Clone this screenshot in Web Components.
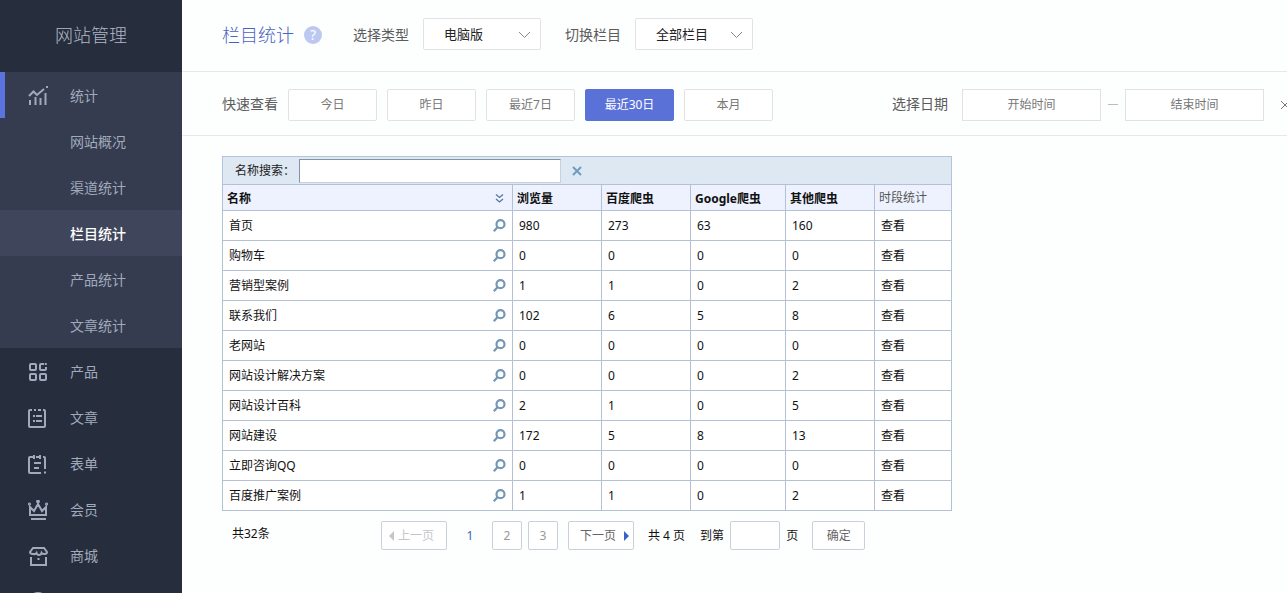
<!DOCTYPE html>
<html lang="zh-CN">
<head>
<meta charset="utf-8">
<title>栏目统计</title>
<style>
  body {
    margin: 0;
    background: #fdfefe;
    color: #111;
    font: 12px/20px "Noto Sans", "Noto Sans CJK SC", sans-serif;
  }
</style>
</head>
<body>
<stats-app></stats-app>

<script>
// rules every component needs
const baseStyle = `
  * { box-sizing: border-box; }
  a { color: inherit; text-decoration: none; }
  button, input, select { font: inherit; color: inherit; margin: 0; }
  button { cursor: pointer; }
  svg { display: block; fill: none; stroke: currentColor; }
`;

// 20x20 menu icons
const icons = {
  stats: '<path d="M1 10L5.500 5.500L9 9L16 3"/><path d="M2 14V19M7.500 11V19M12.500 12V19M17.500 7V19"/><path d="M18 1h2" />',
  product: '<rect x="2" y="2" width="6" height="6" rx="1"/><path d="M16 2h-3q-1 0-1 1v4q0 1 1 1h4q1 0 1-1V5M17.800 1v2"/><rect x="2" y="12" width="6" height="6" rx="1"/><rect x="12" y="12" width="6" height="6" rx="1"/>',
  article: '<path d="M4 2H2q-1 0-1 1v15q0 1 1 1h14q1 0 1-1V3q0-1-1-1h-1M6 2h2M10 2h3M5 8h2M8 8h6M5 13h2M8 13h6"/>',
  form: '<path d="M5 3H2q-1 0-1 1v14q0 1 1 1h11M8 3h3M15 3h1q1 0 1 1v11M17 17.500v2M6 1v4M12 1v4M6 9h7M6 14h5"/>',
  member: '<path d="M2 7v8h16V7l-4 4l-4-7l-4 7zM3 19h15"/><circle cx="1.500" cy="4" r=".6"/><circle cx="10" cy="1.500" r=".9"/><circle cx="18.500" cy="4" r=".6"/>',
  shop: '<path d="M5 2h11l3 4q0 2-2.500 2T13.500 7Q13 9 11 9T8.500 7Q7.500 8.500 5 8Q2 8 2 6zM3 11v8h15v-8M9.500 13h2"/>',
  setting: '<circle cx="10" cy="10" r="9"/><circle cx="10" cy="10" r="3"/>'
};

class NavItem extends HTMLElement {
  connectedCallback() {
    const icon = this.getAttribute('icon');
    this.attachShadow({mode: 'open'});
    this.shadowRoot.innerHTML = `
    <style>
      ${baseStyle}
      :host { display: block; color: #a0aabb; }
      a {
        display: grid;
        grid-template-columns: 20px 1fr;
        align-items: center;
        gap: 22px;
        height: 46px;
        padding: 2px 28px 0;
        font-size: 14px;
      }
      svg { stroke-width: 2; }
      :host([open]) a { box-shadow: inset 5px 0 #5b73dc; }
      :host([current]) { color: #fff; background: #3f455a; }
      :host([current]) a { font-weight: 500; }
    </style>
    <a href="#">
      ${icon ? `<svg width="20" height="20" viewBox="0 0 20 20" aria-hidden="true">${icons[icon]}</svg>` : '<i></i>'}
      <span><slot></slot></span>
    </a>`;
  }
}

class SideNav extends HTMLElement {
  connectedCallback() {
    this.attachShadow({mode: 'open'});
    this.shadowRoot.innerHTML = `
    <style>
      ${baseStyle}
      :host { display: block; background: #262d3c; overflow: hidden; }
      h1 {
        margin: 0;
        height: 72px;
        font-size: 18px;
        font-weight: 300;
        line-height: 70px;
        text-align: center;
        color: #b0b8c8;
      }
      .group { background: #353c50; }
    </style>
    <h1>网站管理</h1>
    <nav>
      <div class="group">
        <nav-item icon="stats" open>统计</nav-item>
        <nav-item>网站概况</nav-item>
        <nav-item>渠道统计</nav-item>
        <nav-item current>栏目统计</nav-item>
        <nav-item>产品统计</nav-item>
        <nav-item>文章统计</nav-item>
      </div>
      <nav-item icon="product">产品</nav-item>
      <nav-item icon="article">文章</nav-item>
      <nav-item icon="form">表单</nav-item>
      <nav-item icon="member">会员</nav-item>
      <nav-item icon="shop">商城</nav-item>
      <nav-item icon="setting"></nav-item>
    </nav>`;
  }
}

// label + drop-down
class SelectField extends HTMLElement {
  connectedCallback() {
    const label = this.getAttribute('label');
    const value = this.getAttribute('value');
    this.attachShadow({mode: 'open'});
    this.shadowRoot.innerHTML = `
    <style>
      ${baseStyle}
      :host { display: flex; align-items: center; gap: 14px; }
      label { font-size: 14px; color: #5c5c5c; padding-top: 2px; }
      .box { display: grid; align-items: center; }
      select, svg { grid-area: 1 / 1; }
      select {
        appearance: none;
        width: 118px;
        height: 32px;
        padding: 0 30px 0 20px;
        border: 1px solid #e2e2e6;
        border-radius: 2px;
        background: #fff;
        font-size: 13px;
        color: #222;
      }
      svg { justify-self: end; margin: 3px 10px 0 0; color: #888; pointer-events: none; }
    </style>
    <label for="field">${label}</label>
    <div class="box">
      <select id="field"><option>${value}</option></select>
      <svg width="13" height="8" viewBox="0 0 13 8"><path d="M1 1l5.500 5.500L12 1"/></svg>
    </div>`;
  }
}

class TopBar extends HTMLElement {
  connectedCallback() {
    this.attachShadow({mode: 'open'});
    this.shadowRoot.innerHTML = `
    <style>
      ${baseStyle}
      :host {
        display: flex;
        align-items: center;
        gap: 24px;
        height: 72px;
        padding: 0 40px 4px;
        border-bottom: 1px solid #e8e8ea;
        box-sizing: border-box;
      }
      .title { display: flex; align-items: center; gap: 10px; margin-right: 7px; padding-top: 2px; }
      h2 { margin: 0; font-size: 18px; font-weight: 300; color: #4a62c0; }
      .help {
        width: 18px;
        height: 18px;
        padding: 0;
        border: 0;
        border-radius: 50%;
        background: #bcc8f2;
        color: #fff;
        font-size: 14px;
        line-height: 18px;
      }
    </style>
    <div class="title">
      <h2>栏目统计</h2>
      <button class="help" type="button">?</button>
    </div>
    <select-field label="选择类型" value="电脑版"></select-field>
    <select-field label="切换栏目" value="全部栏目"></select-field>`;
  }
}

class FilterBar extends HTMLElement {
  connectedCallback() {
    this.attachShadow({mode: 'open'});
    this.shadowRoot.innerHTML = `
    <style>
      ${baseStyle}
      :host {
        display: flex;
        align-items: center;
        justify-content: space-between;
        height: 64px;
        padding: 2px 0 0 40px;
        border-bottom: 1px solid #e8e8ea;
        box-sizing: border-box;
        overflow: hidden;
      }
      .quick, .range { display: flex; align-items: center; }
      .label { font-size: 14px; color: #5c5c5c; padding-bottom: 2px; }
      .quick { gap: 10px; }
      .quick button {
        width: 89px;
        height: 32px;
        padding: 0;
        border: 1px solid #e2e2e6;
        border-radius: 2px;
        background: #fff;
        color: #777;
      }
      .quick button.on { background: #5a72d8; border-color: #5a72d8; color: #fff; }
      .range input {
        width: 139px;
        height: 32px;
        padding: 0;
        border: 1px solid #e2e2e6;
        background: #fff;
        text-align: center;
      }
      .range input::placeholder { color: #777; opacity: 1; }
      .range .label { margin-right: 14px; }
      .dash { width: 10px; height: 1px; margin: 0 7px; background: #bbb; }
      .clear { width: 7px; height: 12px; margin-left: 16px; padding: 0; border: 0; background: none; overflow: hidden; color: #777; }
    </style>
    <div class="quick">
      <span class="label">快速查看</span>
      <button type="button">今日</button>
      <button type="button">昨日</button>
      <button type="button">最近7日</button>
      <button type="button" class="on">最近30日</button>
      <button type="button">本月</button>
    </div>
    <div class="range">
      <label class="label" for="start">选择日期</label>
      <input id="start" placeholder="开始时间">
      <span class="dash"></span>
      <input id="end" placeholder="结束时间" aria-label="结束时间">
      <button class="clear" type="button" aria-label="清除">
        <svg width="10" height="10" viewBox="0 0 10 10"><path d="M1 1l8 8M9 1l-8 8"/></svg>
      </button>
    </div>`;

    this.shadowRoot.querySelectorAll('.quick button').forEach((btn) => {
      btn.addEventListener('click', () => {
        this.shadowRoot.querySelector('.on').classList.remove('on');
        btn.classList.add('on');
      });
    });
  }
}

const rows = [
  ['首页', 980, 273, 63, 160],
  ['购物车', 0, 0, 0, 0],
  ['营销型案例', 1, 1, 0, 2],
  ['联系我们', 102, 6, 5, 8],
  ['老网站', 0, 0, 0, 0],
  ['网站设计解决方案', 0, 0, 0, 2],
  ['网站设计百科', 2, 1, 0, 5],
  ['网站建设', 172, 5, 8, 13],
  ['立即咨询QQ', 0, 0, 0, 0],
  ['百度推广案例', 1, 1, 0, 2]
];

class StatsTable extends HTMLElement {
  connectedCallback() {
    this.attachShadow({mode: 'open'});
    this.shadowRoot.innerHTML = `
    <style>
      ${baseStyle}
      :host { display: block; }
      .search {
        display: flex;
        align-items: center;
        height: 28px;
        padding-left: 12px;
        border: 1px solid #b4c4da;
        border-bottom: 0;
        background: #dde8f2;
      }
      .search label { width: 64px; color: #222; }
      /* centred full-width colon */
      .colon { font-family: "Noto Sans CJK TC", sans-serif; line-height: 1; }
      .search input {
        width: 262px;
        height: 24px;
        padding: 0 4px;
        border: 1px solid #c8d2dc;
        border-top-color: #8493a5;
        border-left-color: #8493a5;
        background: #fff;
      }
      .search button { margin-left: 11px; padding: 0; border: 0; background: none; color: #6f9cc4; }
      .search button svg { stroke-width: 2; }
      table { width: 100%; table-layout: fixed; border-collapse: collapse; }
      th, td { border: 1px solid #b4c0d4; text-align: left; }
      th { height: 26px; padding: 2px 4px 0; background: #edf2fe; }
      th.plain { padding-top: 0; font-weight: 400; color: #555; }
      td { height: 30px; padding: 0 6px; background: #fff; }
      .name { display: flex; align-items: center; justify-content: space-between; }
      .name svg { color: #7397b8; }
      td .name button { padding: 0; border: 0; background: none; }
      td .name svg { stroke-width: 2.200; }
      th .name svg { margin-right: 4px; color: #51799f; stroke-width: 1.3; }
    </style>
    <div class="search">
      <label for="keyword">名称搜索<span class="colon">：</span></label>
      <input id="keyword" type="text">
      <button type="button" aria-label="清空">
        <svg width="10" height="10" viewBox="0 0 10 10"><path d="M1 1l8 8M9 1l-8 8"/></svg>
      </button>
    </div>
    <table>
      <colgroup>
        <col><col style="width: 89px"><col style="width: 89px"><col style="width: 95px"><col style="width: 89px"><col style="width: 77px">
      </colgroup>
      <thead>
        <tr>
          <th><div class="name">名称<svg width="9" height="9" viewBox="0 0 9 9"><path d="M1 .5l3.500 3l3.500-3M1 5l3.500 3L8 5"/></svg></div></th>
          <th>浏览量</th>
          <th>百度爬虫</th>
          <th>Google爬虫</th>
          <th>其他爬虫</th>
          <th class="plain">时段统计</th>
        </tr>
      </thead>
      <tbody>${rows.map((row) => this.getRow(row)).join('')}</tbody>
    </table>`;

    const keyword = this.shadowRoot.querySelector('#keyword');
    this.shadowRoot.querySelector('.search button').addEventListener('click', () => keyword.value = '');
  }

  getRow([name, ...counts]) {
    return `
    <tr>
      <td><div class="name">${name}<button type="button" aria-label="搜索"><svg width="13" height="13" viewBox="0 0 13 13"><circle cx="7.500" cy="5.200" r="4"/><path d="M4.700 8L.8 12.200"/></svg></button></div></td>
      ${counts.map((n) => `<td>${n}</td>`).join('')}
      <td><a href="#">查看</a></td>
    </tr>`;
  }
}

class PageNav extends HTMLElement {
  connectedCallback() {
    this.attachShadow({mode: 'open'});
    this.shadowRoot.innerHTML = `
    <style>
      ${baseStyle}
      :host { display: flex; align-items: center; margin-top: 10px; padding-left: 10px; }
      .total { width: 149px; padding-bottom: 4px; }
      button, input {
        height: 29px;
        padding: 0;
        border: 1px solid #cdd0dc;
        border-radius: 2px;
        background: #fff;
        color: #666;
      }
      .step { display: flex; align-items: center; gap: 4px; width: 66px; padding: 0 7px; }
      .step:disabled { color: #c4c6cc; }
      .step svg { fill: currentColor; stroke: none; }
      .next { justify-content: flex-end; gap: 8px; padding: 0 4px; }
      .next svg { color: #3464cc; }
      .num { width: 30px; color: #999; }
      .pages { display: flex; align-items: center; gap: 6px; margin: 0 10px 0 8px; }
      .current { width: 30px; text-align: center; color: #3a68ae; margin-right: 1px; }
      .count { margin: 0 15px 0 14px; }
      .goto { display: flex; align-items: center; gap: 6px; margin-right: 14px; }
      .goto input { width: 50px; }
      .ok { width: 53px; }
    </style>
    <span class="total">共32条</span>
    <button class="step" type="button" disabled>
      <svg width="5" height="10" viewBox="0 0 5 10"><path d="M5 0v10L0 5z"/></svg>上一页
    </button>
    <div class="pages">
      <span class="current">1</span>
      <button class="num" type="button">2</button>
      <button class="num" type="button">3</button>
    </div>
    <button class="step next" type="button">
      下一页<svg width="5" height="10" viewBox="0 0 5 10"><path d="M0 0v10l5-5z"/></svg>
    </button>
    <span class="count">共 4 页</span>
    <div class="goto">
      <label for="page">到第</label>
      <input id="page" type="text">
      <span>页</span>
    </div>
    <button class="ok" type="button">确定</button>`;
  }
}

class StatsApp extends HTMLElement {
  connectedCallback() {
    this.attachShadow({mode: 'open'});
    this.shadowRoot.innerHTML = `
    <style>
      ${baseStyle}
      :host {
        display: grid;
        grid-template-columns: 182px minmax(0, 1fr);
        height: 100vh;
        overflow: hidden;
      }
      .content { max-width: 770px; padding: 20px 0 0 40px; }
    </style>
    <side-nav></side-nav>
    <main>
      <top-bar></top-bar>
      <filter-bar></filter-bar>
      <div class="content">
        <stats-table></stats-table>
        <page-nav></page-nav>
      </div>
    </main>`;
  }
}

customElements.define('nav-item', NavItem);
customElements.define('side-nav', SideNav);
customElements.define('select-field', SelectField);
customElements.define('top-bar', TopBar);
customElements.define('filter-bar', FilterBar);
customElements.define('stats-table', StatsTable);
customElements.define('page-nav', PageNav);
customElements.define('stats-app', StatsApp);
</script>
</body>
</html>
